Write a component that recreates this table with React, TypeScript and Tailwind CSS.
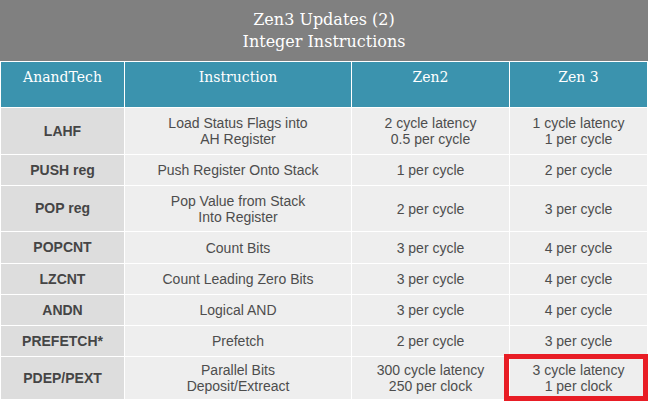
const rows = [
  { name: "LAHF", desc: ["Load Status Flags into", "AH Register"], zen2: ["2 cycle latency", "0.5 per cycle"], zen3: ["1 cycle latency", "1 per cycle"], h: "h-[46px]" },
  { name: "PUSH reg", desc: ["Push Register Onto Stack"], zen2: ["1 per cycle"], zen3: ["2 per cycle"], h: "h-[30px]" },
  { name: "POP reg", desc: ["Pop Value from Stack", "Into Register"], zen2: ["2 per cycle"], zen3: ["3 per cycle"], h: "h-[45px]" },
  { name: "POPCNT", desc: ["Count Bits"], zen2: ["3 per cycle"], zen3: ["4 per cycle"], h: "h-[31px]" },
  { name: "LZCNT", desc: ["Count Leading Zero Bits"], zen2: ["3 per cycle"], zen3: ["4 per cycle"], h: "h-[30px]" },
  { name: "ANDN", desc: ["Logical AND"], zen2: ["3 per cycle"], zen3: ["4 per cycle"], h: "h-[30px]" },
  { name: "PREFETCH*", desc: ["Prefetch"], zen2: ["2 per cycle"], zen3: ["3 per cycle"], h: "h-[30px]" },
  { name: "PDEP/PEXT", desc: ["Parallel Bits", "Deposit/Extreact"], zen2: ["300 cycle latency", "250 per clock"], zen3: ["3 cycle latency", "1 per clock"], h: "h-[42px]" },
];

const headFont = { fontFamily: '"DejaVu Serif", "Liberation Serif", serif' };

const Lines = ({ lines }: { lines: string[] }) => (
  <>
    {lines.map((l) => (
      <span key={l} className="block">
        {l}
      </span>
    ))}
  </>
);

const App = () => {
  return (
    <main
      className="relative w-[648px] h-[401px] overflow-hidden bg-white"
      style={{ fontFamily: '"Liberation Sans", Arial, sans-serif' }}
    >
      <header
        className="flex h-[61px] flex-col items-center justify-center bg-[#808080] text-[16px] leading-[22px] text-white"
        style={headFont}
      >
        <span>Zen3 Updates (2)</span>
        <span>Integer Instructions</span>
      </header>

      <section className="grid grid-cols-[123px_226px_157px_137px] gap-px px-px pt-px">
        {["AnandTech", "Instruction", "Zen2", "Zen 3"].map((t) => (
          <div
            key={t}
            className="h-[45px] bg-[#3b93ae] pt-[6px] text-center text-[14px] leading-[18px] text-white"
            style={headFont}
          >
            {t}
          </div>
        ))}

        {rows.map((r) => (
          <div key={r.name} className="contents">
            <div className={`${r.h} flex items-center justify-center bg-[#dddddd] text-[14px] font-bold text-[#454545]`}>
              {r.name}
            </div>
            <div className={`${r.h} flex flex-col items-center justify-center bg-[#eeeeee] text-center text-[14px] leading-[16px] text-[#4d4d4d]`}>
              <Lines lines={r.desc} />
            </div>
            <div className={`${r.h} flex flex-col items-center justify-center bg-[#eeeeee] text-center text-[14px] leading-[16px] text-[#4d4d4d]`}>
              <Lines lines={r.zen2} />
            </div>
            <div className={`${r.h} flex flex-col items-center justify-center bg-[#eeeeee] text-center text-[14px] leading-[16px] text-[#4d4d4d]`}>
              <Lines lines={r.zen3} />
            </div>
          </div>
        ))}
      </section>

      {/* highlight box */}
      <div className="absolute left-[504px] top-[354px] h-[47px] w-[144px] border-[5px] border-[#e81d25]" />
    </main>
  );
};

export default App;
